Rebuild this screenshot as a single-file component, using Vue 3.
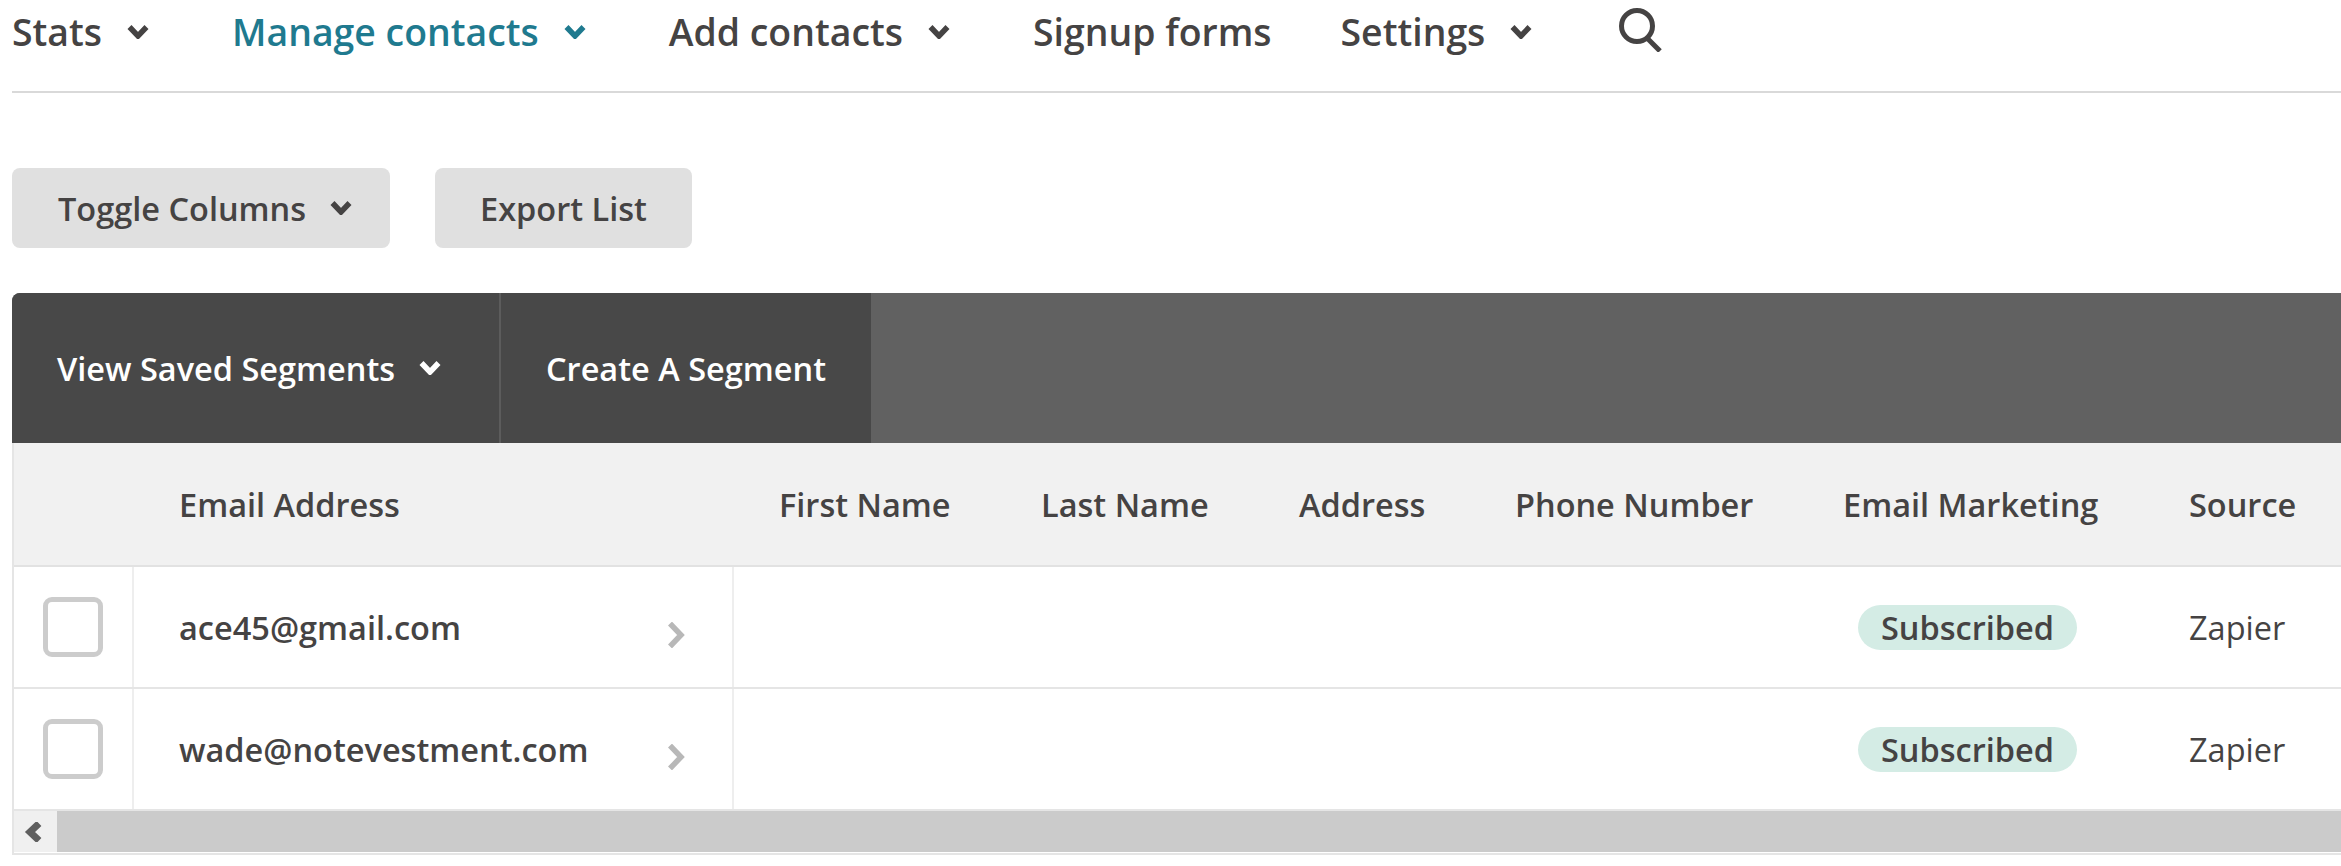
<script setup>
const navItems = [
  { label: "Stats", caret: true },
  { label: "Manage contacts", caret: true, active: true },
  { label: "Add contacts", caret: true },
  { label: "Signup forms", caret: false },
  { label: "Settings", caret: true },
];

const columns = ["First Name", "Last Name", "Address", "Phone Number", "Email Marketing", "Source"];

const contacts = [
  { email: "ace45@gmail.com", status: "Subscribed", source: "Zapier" },
  { email: "wade@notevestment.com", status: "Subscribed", source: "Zapier" },
];
</script>

<template>
  <div class="page">
    <nav class="nav">
      <div v-for="item in navItems" :key="item.label" class="nav-item" :class="{ active: item.active }">
        <span>{{ item.label }}</span>
        <svg v-if="item.caret" class="caret" viewBox="0 0 22 14"><path d="M2.5 2 L11 11 L19.5 2" /></svg>
      </div>
      <svg class="search" viewBox="0 0 46 44"><circle cx="18" cy="18" r="15.5" /><path d="M28 30 L41 43" /></svg>
    </nav>

    <div class="actions">
      <button class="btn btn-toggle">Toggle Columns<svg class="caret" viewBox="0 0 22 14"><path d="M2.5 2 L11 11 L19.5 2" /></svg></button>
      <button class="btn btn-export">Export List</button>
    </div>

    <div class="toolbar">
      <div class="tool tool-first">View Saved Segments<svg class="caret" viewBox="0 0 22 14"><path d="M2.5 2 L11 11 L19.5 2" /></svg></div>
      <div class="tool tool-second">Create A Segment</div>
    </div>

    <div class="table">
      <div class="row head">
        <div class="cell check"></div>
        <div class="cell email">Email Address</div>
        <div v-for="col in columns" :key="col" class="cell col">{{ col }}</div>
      </div>
      <div v-for="c in contacts" :key="c.email" class="row body">
        <div class="cell check"><span class="box"></span></div>
        <div class="cell email">
          <span class="address">{{ c.email }}</span>
          <svg class="open" viewBox="0 0 18 26"><path d="M3 1.5 L14 13 L3 24.5" /></svg>
        </div>
        <div class="cell col"></div>
        <div class="cell col"></div>
        <div class="cell col"></div>
        <div class="cell col"></div>
        <div class="cell col status"><span class="badge">{{ c.status }}</span></div>
        <div class="cell col source">{{ c.source }}</div>
      </div>
      <div class="scrollbar">
        <div class="scroll-left"><svg viewBox="0 0 18 20"><path d="M15 1.5 L6 10 L15 18.5" /></svg></div>
      </div>
    </div>
  </div>
</template>

<style scoped>
.page {
  width: 2341px;
  height: 866px;
  overflow: hidden;
  padding-left: 12px;
  box-sizing: border-box;
  background: #fff;
  font-family: "Open Sans", sans-serif;
  color: #454343;
}
.nav {
  display: flex;
  align-items: center;
  gap: 69px;
  height: 63px;
  padding-bottom: 28px;
  border-bottom: 2px solid #d9d9d9;
}
.nav-item {
  display: flex;
  align-items: center;
  gap: 25px;
  font-size: 37.4px;
  font-weight: 600;
  white-space: nowrap;
}
.nav-item .caret {
  margin-right: 14px;
}
.nav-item.active {
  color: #1f7a8f;
}
.caret {
  width: 22px;
  height: 14px;
  flex: none;
}
.caret path {
  fill: none;
  stroke: currentColor;
  stroke-width: 5.5;
}
.search {
  width: 46px;
  height: 44px;
  margin-left: 4px;
  margin-bottom: 3px;
  flex: none;
}
.search circle,
.search path {
  fill: none;
  stroke: #454343;
  stroke-width: 5;
}
.actions {
  display: flex;
  gap: 45px;
  margin-top: 75px;
}
.btn {
  display: flex;
  align-items: center;
  gap: 24px;
  height: 80px;
  border: 0;
  border-radius: 8px;
  background: #e0e0e0;
  color: #454343;
  font: 600 32.5px "Open Sans", sans-serif;
}
.btn-toggle {
  padding: 0 46px;
}
.btn-toggle .caret {
  margin-right: -8px;
}
.btn-export {
  padding: 0 45px;
}
.toolbar {
  display: flex;
  height: 150px;
  margin-top: 45px;
  background: #616161;
  border-radius: 8px 0 0 0;
  overflow: hidden;
}
.tool {
  display: flex;
  align-items: center;
  gap: 24px;
  background: #484848;
  color: #fff;
  font-size: 32.5px;
  font-weight: 600;
  white-space: nowrap;
}
.tool-first {
  width: 489px;
  box-sizing: border-box;
  padding-left: 45px;
  border-right: 2px solid #5c5c5c;
}
.tool-second {
  padding: 0 45px;
}
.table {
  border-left: 2px solid #e5e5e5;
  border-bottom: 2px solid #e5e5e5;
  padding-bottom: 1px;
}
.row {
  display: grid;
  grid-template-columns: 120px 600px 262px 258px 216px 328px 346px 400px;
}
.head {
  height: 124px;
  background: #f1f1f1;
  border-bottom: 2px solid #e2e2e2;
  box-sizing: border-box;
  font-size: 32.5px;
  font-weight: 600;
}
.head .cell {
  padding-top: 1px;
}
.body {
  height: 122px;
  box-sizing: border-box;
  border-bottom: 2px solid #e5e5e5;
  font-size: 32.5px;
}
.body:last-of-type {
  border-bottom: 0;
}
.cell {
  display: flex;
  align-items: center;
  white-space: nowrap;
}
.email {
  padding-left: 45px;
}
.col {
  padding-left: 45px;
}
.body .check,
.body .email {
  border-right: 2px solid #eeeeee;
}
.check {
  justify-content: center;
}
.box {
  width: 60px;
  height: 60px;
  box-sizing: border-box;
  border: 5px solid #cccccc;
  border-radius: 9px;
  background: #fff;
}
.address {
  font-weight: 600;
}
.open {
  width: 18px;
  height: 26px;
  margin-left: auto;
  margin-right: 47px;
  margin-top: 16px;
  flex: none;
}
.open path {
  fill: none;
  stroke: #b8b8b8;
  stroke-width: 5.5;
}
.status {
  padding-left: 60px;
}
.badge {
  display: inline-flex;
  align-items: center;
  height: 45px;
  padding: 0 23px;
  border-radius: 23px;
  background: #d4ece5;
  font-weight: 600;
}
.scrollbar {
  height: 41px;
  background: #cbcbcb;
}
.scroll-left {
  display: flex;
  align-items: center;
  justify-content: center;
  width: 43px;
  height: 41px;
  padding-right: 5px;
  box-sizing: border-box;
  background: #f0f0f0;
}
.scroll-left svg {
  width: 18px;
  height: 20px;
}
.scroll-left path {
  fill: none;
  stroke: #5f5f5f;
  stroke-width: 7;
}
</style>

<style>
html,
body {
  margin: 0;
  overflow: hidden;
  background: #fff;
}
</style>
